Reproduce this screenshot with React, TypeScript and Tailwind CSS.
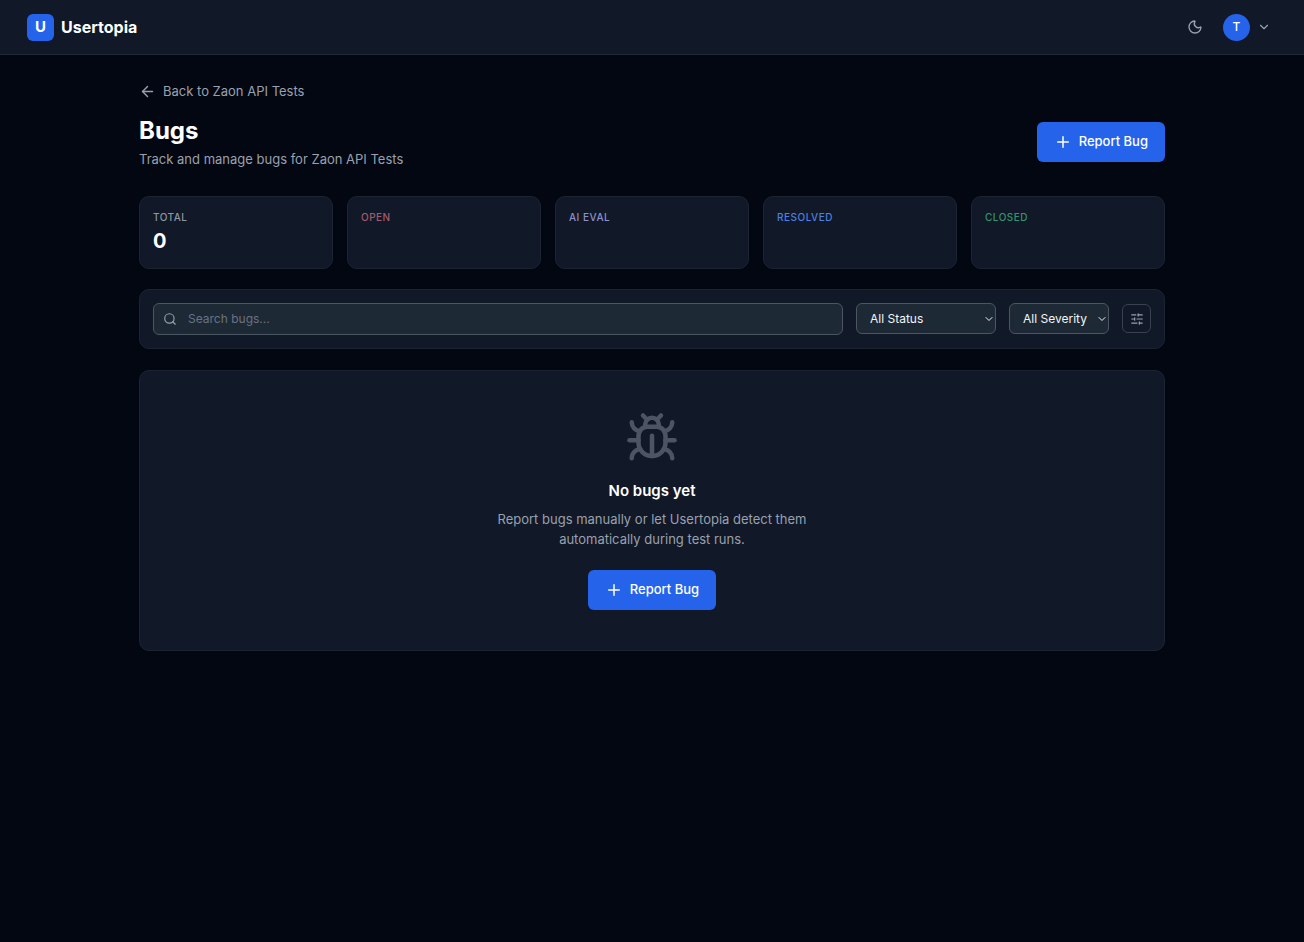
import { ArrowLeft, Bug, ChevronDown, Moon, Plus, Search, SlidersHorizontal } from 'lucide-react';

const stats = [
  { label: 'Total', value: '0', color: 'text-[#8f96a3]' },
  { label: 'Open', value: '', color: 'text-[#a45c6c]' },
  { label: 'AI Eval', value: '', color: 'text-[#8f92c8]' },
  { label: 'Resolved', value: '', color: 'text-[#4f7fe0]' },
  { label: 'Closed', value: '', color: 'text-[#35936f]' },
];

const ReportBugButton = () => (
  <button
    type="button"
    className="inline-flex h-10 flex-none items-center gap-[7px] rounded-md bg-[#2563eb] pr-[17px] pl-[17px] text-[13px] font-medium text-white hover:bg-blue-700"
  >
    <Plus className="size-[18px]" aria-hidden="true" />
    Report Bug
  </button>
);

const Header = () => (
  <header className="flex h-[55px] flex-none items-center justify-between border-b border-[#1f2937] bg-[#111827] pr-[33px] pl-[27px]">
    <a href="/" className="flex items-center gap-[7px]">
      <span className="flex size-[27px] items-center justify-center rounded-md bg-[#2563eb] text-[15px] font-bold text-white">
        U
      </span>
      <span className="text-base font-bold text-white">Usertopia</span>
    </a>
    <div className="flex items-center gap-[14px]">
      <button type="button" aria-label="Toggle theme" className="flex size-7 items-center justify-center text-gray-400">
        <Moon className="size-4" />
      </button>
      <button type="button" aria-label="Account menu" className="flex items-center gap-[7px]">
        <span className="flex size-[27px] items-center justify-center rounded-full bg-[#2563eb] text-xs font-medium text-white">
          T
        </span>
        <ChevronDown className="size-[14px] text-gray-400" />
      </button>
    </div>
  </header>
);

const StatCards = () => (
  <section className="mt-[27px] grid grid-cols-5 gap-[14px]">
    {stats.map((stat) => (
      <div key={stat.label} className="h-[73px] rounded-[10px] border border-[#1c2433] bg-[#111827] p-[13px]">
        <p className={`text-[10px] leading-[14px] font-medium tracking-wider uppercase ${stat.color}`}>{stat.label}</p>
        <p className="mt-[5px] text-xl leading-6 font-bold text-white">{stat.value}</p>
      </div>
    ))}
  </section>
);

const Filters = () => (
  <section className="mt-5 flex items-center gap-[13px] rounded-[10px] border border-[#1c2433] bg-[#111827] p-[13px]">
    <div className="relative flex-1">
      <Search className="pointer-events-none absolute top-1/2 left-[10px] size-[14px] -translate-y-1/2 text-gray-400" />
      <input
        type="text"
        aria-label="Search bugs"
        placeholder="Search bugs..."
        className="h-8 w-full rounded-md border border-[#4b5563] bg-[#1e2936] pr-3 pl-[34px] text-xs text-white placeholder:text-gray-500"
      />
    </div>
    <div className="relative">
      <select
        aria-label="Status"
        className="h-[31px] w-[140px] appearance-none rounded-md border border-[#4b5563] bg-[#1e2936] pr-6 pl-[13px] text-xs text-gray-100"
      >
        <option>All Status</option>
      </select>
      <ChevronDown className="pointer-events-none absolute top-1/2 right-[1px] size-3 -translate-y-1/2 text-gray-100" />
    </div>
    <div className="relative">
      <select
        aria-label="Severity"
        className="h-[31px] w-[100px] appearance-none rounded-md border border-[#4b5563] bg-[#1e2936] pr-4 pl-[13px] text-xs text-gray-100"
      >
        <option>All Severity</option>
      </select>
      <ChevronDown className="pointer-events-none absolute top-1/2 right-[1px] size-3 -translate-y-1/2 text-gray-100" />
    </div>
    <button
      type="button"
      aria-label="More filters"
      className="flex size-[29px] items-center justify-center rounded-md border border-[#374151] text-gray-400"
    >
      <SlidersHorizontal className="size-[14px]" />
    </button>
  </section>
);

const EmptyState = () => (
  <section className="mt-[21px] flex flex-col items-center rounded-[10px] border border-[#1c2433] bg-[#111827] px-6 py-10 text-center">
    <Bug className="size-[54px] text-[#4b5563]" aria-hidden="true" />
    <h2 className="mt-[14px] text-[15px] leading-6 font-semibold text-white">No bugs yet</h2>
    <p className="mt-[6px] max-w-[340px] text-[13px] leading-5 text-gray-400">
      Report bugs manually or let Usertopia detect them automatically during test runs.
    </p>
    <div className="mt-[21px]">
      <ReportBugButton />
    </div>
  </section>
);

const App = () => {
  return (
    <div className="flex min-h-screen flex-col bg-[#030712] font-['Inter',sans-serif]">
      <Header />
      <main className="mx-auto w-full max-w-[1080px] px-[27px] pt-[26px]">
        <a href="/projects" className="inline-flex items-center gap-[7px] text-[13px] leading-5 text-gray-400">
          <ArrowLeft className="size-[17px]" aria-hidden="true" />
          Back to Zaon API Tests
        </a>
        <div className="mt-[9px] flex items-center justify-between">
          <div>
            <h1 className="text-2xl leading-8 font-bold text-white">Bugs</h1>
            <p className="mt-[2px] text-[13px] leading-5 text-gray-400">Track and manage bugs for Zaon API Tests</p>
          </div>
          <ReportBugButton />
        </div>
        <StatCards />
        <Filters />
        <EmptyState />
      </main>
    </div>
  );
};

export default App;
